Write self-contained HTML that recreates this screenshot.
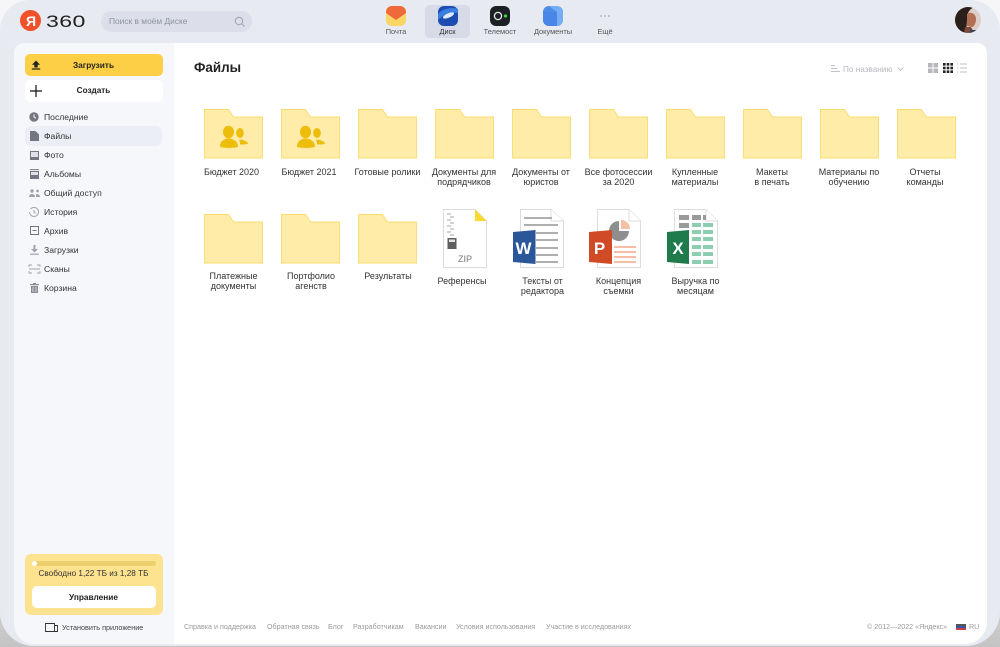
<!DOCTYPE html>
<html lang="ru"><head><meta charset="utf-8"><title>Файлы</title>
<style>
*{box-sizing:border-box}
html,body{margin:0;padding:0}
body{width:1000px;height:647px;overflow:hidden;position:relative;background:linear-gradient(#f6f6f8 0,#f0f0f2 75%,#c4c4c4 100%);font-family:"Liberation Sans",sans-serif;color:#222}
.a{position:absolute}
.t{position:absolute;white-space:nowrap;line-height:1}
.c{transform:translateX(-50%);text-align:center}
.lbl{position:absolute;width:76px;transform:translateX(-50%);text-align:center;font-size:9px;line-height:10.2px;color:#333}
.nav{position:absolute;left:44px;font-size:8.6px;color:#333;line-height:10px;white-space:nowrap}
.f{position:absolute;font-size:7.15px;color:#9a9a9a;line-height:8px;white-space:nowrap;top:623px}
svg{position:absolute;overflow:visible}
</style></head><body>
<div class="a" style="left:0;top:0;width:1000px;height:645.500px;background:#e8eaf2;border-radius:30px 30px 34px 34px"></div>
<div class="a" style="left:14px;top:43px;width:160px;height:601px;background:#f6f7fb;border-radius:10px 0 0 20px"></div>
<div class="a" style="left:174px;top:43px;width:813px;height:601px;background:#fff;border-radius:0 10px 22px 0"></div>

<!-- logo -->
<div class="a" style="left:20px;top:10px;width:21px;height:21px;border-radius:50%;background:#f0502a"></div>
<div class="t" style="left:26px;top:14px;font-size:14px;font-weight:bold;color:#fff">Я</div>
<div class="t" style="left:46px;top:13px;font-size:17px;letter-spacing:.3px;color:#222;transform:scaleX(1.36);transform-origin:left">360</div>
<!-- search -->
<div class="a" style="left:101px;top:11px;width:151px;height:21px;border-radius:11px;background:#dcdfe9"></div>
<div class="t" style="left:109px;top:17px;font-size:8.4px;color:#8e929c">Поиск в моём Диске</div>
<svg style="left:234px;top:16px" width="12" height="12" viewBox="0 0 12 12" fill="none" stroke="#a4a7b0" stroke-width="1.1"><circle cx="5" cy="5" r="3.7"/><path d="M8 8l2.6 2.6"/></svg>

<!-- top apps -->
<div class="a" style="left:425px;top:5px;width:45px;height:33px;border-radius:5px;background:#d7dbe7"></div>
<svg style="left:386px;top:6px" width="20" height="20" viewBox="0 0 20 20"><rect width="20" height="20" rx="6" fill="#fcd664"/><path d="M0 6a6 6 0 0 1 6-6h8a6 6 0 0 1 6 6v1l-10 7L0 7z" fill="#f0693a"/></svg>
<svg style="left:438px;top:6px" width="20" height="20" viewBox="0 0 20 20"><rect width="20" height="20" rx="6" fill="#1d4db0"/><path d="M0 8C5 2 14 1 20 3v4C14 6 6 8 0 14z" fill="#3a7ee0"/><ellipse cx="10.5" cy="9.5" rx="6" ry="2.2" transform="rotate(-24 10.5 9.5)" fill="#dfeaff"/></svg>
<svg style="left:490px;top:6px" width="20" height="20" viewBox="0 0 20 20" fill="none"><rect width="20" height="20" rx="6" fill="#1d2022"/><circle cx="8" cy="10" r="3.6" stroke="#e6e6e6" stroke-width="1.3"/><rect x="14" y="8.5" width="3" height="3" rx="1" fill="#3fe04b"/></svg>
<svg style="left:543px;top:6px" width="20" height="20" viewBox="0 0 20 20"><rect width="20" height="20" rx="6" fill="#4d8de8"/><path d="M6 0h8a6 6 0 0 1 6 6v8a6 6 0 0 1-6 6V6z" fill="#7fb4f5" opacity=".8"/><path d="M0 6h14v14H6a6 6 0 0 1-6-6z" fill="#4a86e6"/></svg>
<svg style="left:599px;top:14px" width="12" height="4" fill="#b6b9c2"><circle cx="2" cy="2" r="1"/><circle cx="6" cy="2" r="1"/><circle cx="10" cy="2" r="1"/></svg>
<div class="t c" style="left:396px;top:28px;font-size:7.4px;color:#555">Почта</div>
<div class="t c" style="left:447.5px;top:28px;font-size:7.4px;color:#333">Диск</div>
<div class="t c" style="left:500px;top:28px;font-size:7.4px;color:#555">Телемост</div>
<div class="t c" style="left:553px;top:28px;font-size:7.4px;color:#555">Документы</div>
<div class="t c" style="left:605px;top:28px;font-size:7.4px;color:#555">Ещё</div>

<!-- avatar -->
<svg style="left:955px;top:7px" width="26" height="26" viewBox="0 0 26 26"><defs><clipPath id="av"><circle cx="13" cy="13" r="13"/></clipPath></defs><g clip-path="url(#av)"><rect width="26" height="26" fill="#dccdc6"/><path d="M0 0h19c-4 2-6 5-7 9 0 6 0 11-2 17H0z" fill="#2a1f1b"/><path d="M12 7c4-3 9 0 9 5 0 3-1 7-4 8l-5-1 0-6z" fill="#b36f55"/><path d="M10 20l6 0 1 2 3 4H9z" fill="#7d4a3a"/><path d="M15 23h7v3h-7z" fill="#34435f"/></g></svg>

<!-- buttons -->
<div class="a" style="left:25px;top:54px;width:138px;height:22px;border-radius:5px;background:#fccf47"></div>
<svg style="left:31px;top:60px" width="10" height="10" viewBox="0 0 10 10" fill="#222"><path d="M5 0.5l4 4.2H6.7V7.5H3.3V4.7H1z"/><rect x="0.8" y="8.4" width="8.4" height="1.2"/></svg>
<div class="t c" style="left:93.5px;top:60.500px;font-size:8.300px;font-weight:bold;color:#222">Загрузить</div>
<div class="a" style="left:25px;top:80px;width:138px;height:22px;border-radius:5px;background:#fff"></div>
<svg style="left:30px;top:85px" width="12" height="12" stroke="#111" stroke-width="1.2"><path d="M6 0v12M0 6h12"/></svg>
<div class="t c" style="left:93.5px;top:86.500px;font-size:8.200px;font-weight:bold;color:#222">Создать</div>

<!-- nav -->
<div class="a" style="left:25px;top:126px;width:137px;height:20px;border-radius:6px;background:#eceef5"></div>
<div class="nav" style="top:112px">Последние</div>
<div class="nav" style="top:131px">Файлы</div>
<div class="nav" style="top:150px">Фото</div>
<div class="nav" style="top:169px">Альбомы</div>
<div class="nav" style="top:188px">Общий доступ</div>
<div class="nav" style="top:207px">История</div>
<div class="nav" style="top:226px">Архив</div>
<div class="nav" style="top:245px">Загрузки</div>
<div class="nav" style="top:264px">Сканы</div>
<div class="nav" style="top:283px">Корзина</div>
<svg style="left:29px;top:112px" width="10" height="10"><circle cx="5" cy="5" r="4.7" fill="#747781"/><path d="M5 2.5V5l1.8 1.2" stroke="#fff" fill="none"/></svg>
<svg style="left:30px;top:131px" width="9" height="10"><path d="M0 0h5.5L9 3.5V10H0z" fill="#747781"/></svg>
<svg style="left:30px;top:151px" width="9" height="9"><rect width="9" height="9" fill="#747781"/><rect x="1" y="1" width="7" height="5" fill="#dfe1e6"/></svg>
<svg style="left:30px;top:169px" width="9" height="10"><rect y="0" width="9" height="1.2" fill="#8a8d96"/><rect y="2" width="9" height="8" fill="#747781"/><rect x="1" y="3" width="7" height="3" fill="#dfe1e6"/></svg>
<svg style="left:29px;top:189px" width="11" height="9" fill="#a0a3ab"><circle cx="3" cy="2" r="1.7"/><path d="M0 8c0-2 1.5-3 3-3s3 1 3 3z"/><circle cx="8.5" cy="2" r="1.4"/><path d="M7 5c2 0 4 .7 4 3H7z"/></svg>
<svg style="left:29px;top:207px" width="10" height="10" fill="none" stroke="#a0a3ab"><path d="M1.6 2A4.5 4.5 0 1 1 .5 5"/><path d="M5 3v2.3l1.5 1"/></svg>
<svg style="left:30px;top:226px" width="9" height="9" fill="none" stroke="#747781"><rect x=".5" y=".5" width="8" height="8"/><path d="M2.5 4.5h4"/></svg>
<svg style="left:30px;top:245px" width="9" height="10" fill="#a0a3ab"><path d="M3.5 0h2v4H8L4.5 7.5 1 4h2.500z"/><rect y="8.600" width="9" height="1.200"/></svg>
<svg style="left:29px;top:264px" width="11" height="10" fill="none" stroke="#a0a3ab" stroke-width=".9"><path d="M0 3V1h3M8 1h3v2M0 7v2h3M8 9h3V7M0 5h11"/></svg>
<svg style="left:30px;top:283px" width="9" height="10" fill="#8a8d96"><rect y="1" width="9" height="1.200"/><rect x="3" width="3" height="1.500"/><path d="M1 3h7v7H1z"/><path d="M3 4v5M6 4v5" stroke="#f6f7fb" stroke-width=".7"/></svg>

<!-- storage -->
<div class="a" style="left:25px;top:554px;width:138px;height:61px;border-radius:6px;background:#fde28f"></div>
<div class="a" style="left:32px;top:561px;width:124px;height:5px;border-radius:3px;background:#ecd06e"></div>
<div class="a" style="left:32px;top:561px;width:5px;height:5px;border-radius:50%;background:#fff"></div>
<div class="t c" style="left:93.5px;top:570px;font-size:8.200px;color:#333">Свободно 1,22 ТБ из 1,28 ТБ</div>
<div class="a" style="left:32px;top:586px;width:124px;height:22px;border-radius:5px;background:#fff"></div>
<div class="t c" style="left:93.500px;top:592.500px;font-size:8.300px;font-weight:bold;color:#222">Управление</div>
<svg style="left:45px;top:623px" width="13" height="9" fill="none" stroke="#333" stroke-width=".9"><path d="M.5 8.500V.5h9v8zM9.500 2.500h3v6h-3"/></svg>
<div class="t" style="left:62px;top:623.500px;font-size:7.250px;color:#444">Установить приложение</div>

<!-- header -->
<div class="t" style="left:194px;top:61px;font-size:13.400px;font-weight:bold;color:#222">Файлы</div>
<svg style="left:831px;top:65px" width="9" height="8" stroke="#c0c2c8"><path d="M0 .5h4M0 3.500h6M0 6.500h9"/></svg>
<div class="t" style="left:843px;top:65.500px;font-size:8.200px;color:#b5b7bd">По названию</div>
<svg style="left:897px;top:67px" width="7" height="5" fill="none" stroke="#c0c2c8"><path d="M.5.5L3.500 3.500 6.500.5"/></svg>
<svg style="left:928px;top:63px" width="10" height="10" fill="#b6b8be"><rect width="4.500" height="4.500"/><rect x="5.500" width="4.500" height="4.500"/><rect y="5.500" width="4.500" height="4.500"/><rect x="5.500" y="5.500" width="4.500" height="4.500"/></svg>
<svg style="left:943px;top:63px" width="10" height="10" fill="#222"><rect width="2.600" height="2.600"/><rect x="3.700" width="2.600" height="2.600"/><rect x="7.400" width="2.600" height="2.600"/><rect y="3.700" width="2.600" height="2.600"/><rect x="3.700" y="3.700" width="2.600" height="2.600"/><rect x="7.400" y="3.700" width="2.600" height="2.600"/><rect y="7.400" width="2.600" height="2.600"/><rect x="3.700" y="7.400" width="2.600" height="2.600"/><rect x="7.400" y="7.400" width="2.600" height="2.600"/></svg>
<svg style="left:957px;top:63px" width="10" height="10" stroke="#c0c2c8"><path d="M0 1h1.500M3 1h7M0 5h1.500M3 5h7M0 9h1.500M3 9h7"/></svg>

<!-- folders -->
<svg width="0" height="0" style="position:absolute"><defs>
<symbol id="fo" viewBox="0 0 59 50"><path d="M.5.500h24l5 7.500h29v41H.5z" fill="#feeca8" stroke="#fbdc6c" stroke-width=".9"/></symbol>
<symbol id="fp" viewBox="0 0 59 50"><path d="M.5.500h24l5 7.500h29v41H.5z" fill="#feeca8" stroke="#fbdc6c" stroke-width=".9"/><g fill="#edbd0c"><ellipse cx="24.500" cy="23" rx="5.500" ry="6.300"/><path d="M16 37.500c0-5.500 4.500-8 8.500-8s9.500 2.500 9.500 8c0 1.800-18 1.800-18 0z"/><ellipse cx="36" cy="24" rx="3.800" ry="5"/><path d="M35 30.500c4 0 8 1.500 9 4 .3 1-6 1-8 1 0-2-.2-3.500-1-5z"/></g></symbol>
</defs></svg>
<svg style="left:204px;top:109px" width="59" height="50"><use href="#fp"/></svg>
<svg style="left:281px;top:109px" width="59" height="50"><use href="#fp"/></svg>
<svg style="left:358px;top:109px" width="59" height="50"><use href="#fo"/></svg>
<svg style="left:435px;top:109px" width="59" height="50"><use href="#fo"/></svg>
<svg style="left:512px;top:109px" width="59" height="50"><use href="#fo"/></svg>
<svg style="left:589px;top:109px" width="59" height="50"><use href="#fo"/></svg>
<svg style="left:666px;top:109px" width="59" height="50"><use href="#fo"/></svg>
<svg style="left:743px;top:109px" width="59" height="50"><use href="#fo"/></svg>
<svg style="left:820px;top:109px" width="59" height="50"><use href="#fo"/></svg>
<svg style="left:897px;top:109px" width="59" height="50"><use href="#fo"/></svg>
<svg style="left:204px;top:214px" width="59" height="50"><use href="#fo"/></svg>
<svg style="left:281px;top:214px" width="59" height="50"><use href="#fo"/></svg>
<svg style="left:358px;top:214px" width="59" height="50"><use href="#fo"/></svg>

<!-- zip -->
<svg style="left:443px;top:209px" width="44" height="59" viewBox="0 0 44 59"><path d="M.5.500H32L43.500 12v46.500H.5z" fill="#fff" stroke="#dcdcdc"/><path d="M32 .5L43.500 12H32z" fill="#fbd92f"/><path d="M4 5h4M7 8h4M4 11h4M7 14h4M4 17h4M7 20h4M4 23h4M7 26h4" stroke="#a5a5a5" stroke-width="1.100"/><rect x="4.500" y="29" width="9" height="11" fill="#5f5f5f"/><rect x="6" y="30.500" width="6" height="2.500" fill="#e4e4e4"/><text x="22" y="53" font-size="9" text-anchor="middle" fill="#777" font-family="Liberation Sans">ZIP</text></svg>
<!-- word -->
<svg style="left:513px;top:209px" width="51" height="59" viewBox="0 0 51 59"><path d="M7.500.5H38L50.500 12v46.500h-43z" fill="#fff" stroke="#dcdcdc"/><path d="M38 .5V12h12.500" fill="#fff" stroke="#dcdcdc"/><path d="M11 9h28M11 16h34M23 24h22M23 31h22M23 39h22M23 46h22M23 53h22" stroke="#a4a4a4" stroke-width="1.800" fill="none"/><path d="M0 23L22.500 21v34L0 53z" fill="#2b579a"/><text x="10.500" y="45" font-size="17" font-weight="bold" text-anchor="middle" fill="#fff" font-family="Liberation Sans">W</text></svg>
<!-- ppt -->
<svg style="left:589px;top:209px" width="52" height="59" viewBox="0 0 52 59"><path d="M8.500.5H40L51.500 12v46.500h-43z" fill="#fff" stroke="#dcdcdc"/><path d="M40 .5V12h11.500" fill="#fff" stroke="#dcdcdc"/><path d="M30 12a10 10 0 1 0 10 10H30z" fill="#8e8e8e"/><path d="M32 11a9 9 0 0 1 9 9H32z" fill="#f5bfa5"/><path d="M25 38h22M25 43h22M25 48h22M25 53h22" stroke="#f5b49b" stroke-width="1.800"/><path d="M0 23L23 21v34L0 53z" fill="#d04a25"/><text x="10.500" y="45" font-size="17" font-weight="bold" text-anchor="middle" fill="#fff" font-family="Liberation Sans">P</text></svg>
<!-- excel -->
<svg style="left:667px;top:209px" width="52" height="59" viewBox="0 0 52 59"><path d="M7.500.5H39L50.500 12v46.500h-43z" fill="#fff" stroke="#dcdcdc"/><path d="M39 .5V12h11.500" fill="#fff" stroke="#dcdcdc"/><g fill="#9a9a9a"><rect x="12" y="6" width="10" height="5"/><rect x="25" y="6" width="9" height="5"/><rect x="36" y="6" width="3" height="5"/><rect x="12" y="14" width="10" height="5"/></g><g fill="#8fcdb0"><rect x="25" y="14" width="9" height="4"/><rect x="36" y="14" width="10" height="4"/><rect x="25" y="21" width="9" height="4"/><rect x="36" y="21" width="10" height="4"/><rect x="25" y="28" width="9" height="4"/><rect x="36" y="28" width="10" height="4"/><rect x="25" y="36" width="9" height="4"/><rect x="36" y="36" width="10" height="4"/><rect x="25" y="43" width="9" height="4"/><rect x="36" y="43" width="10" height="4"/><rect x="25" y="51" width="9" height="4"/><rect x="36" y="51" width="10" height="4"/></g><path d="M0 23L22 21v34L0 53z" fill="#1f7a4c"/><text x="11" y="45" font-size="17" font-weight="bold" text-anchor="middle" fill="#fff" font-family="Liberation Sans">X</text></svg>

<!-- labels -->
<div class="lbl" style="left:231.500px;top:167px">Бюджет 2020</div>
<div class="lbl" style="left:309px;top:167px">Бюджет 2021</div>
<div class="lbl" style="left:387.500px;top:167px">Готовые ролики</div>
<div class="lbl" style="left:464px;top:167px">Документы для подрядчиков</div>
<div class="lbl" style="left:541px;top:167px">Документы от юристов</div>
<div class="lbl" style="left:618.500px;top:167px">Все фотосессии за 2020</div>
<div class="lbl" style="left:695px;top:167px">Купленные материалы</div>
<div class="lbl" style="left:772px;top:167px">Макеты<br>в печать</div>
<div class="lbl" style="left:849px;top:167px">Материалы по обучению</div>
<div class="lbl" style="left:925px;top:167px">Отчеты<br>команды</div>
<div class="lbl" style="left:233.500px;top:271px">Платежные документы</div>
<div class="lbl" style="left:311px;top:271px">Портфолио<br>агенств</div>
<div class="lbl" style="left:388px;top:271px">Результаты</div>
<div class="lbl" style="left:462px;top:276px">Референсы</div>
<div class="lbl" style="left:542.500px;top:276px">Тексты от редактора</div>
<div class="lbl" style="left:618.500px;top:276px">Концепция съемки</div>
<div class="lbl" style="left:695.500px;top:276px">Выручка по месяцам</div>

<!-- footer -->
<div class="f" style="left:184px">Справка и поддержка</div>
<div class="f" style="left:267px">Обратная связь</div>
<div class="f" style="left:328px">Блог</div>
<div class="f" style="left:353px">Разработчикам</div>
<div class="f" style="left:415px">Вакансии</div>
<div class="f" style="left:456px">Условия использования</div>
<div class="f" style="left:546px">Участие в исследованиях</div>
<div class="f" style="left:867px">© 2012—2022 «Яндекс»</div>
<svg style="left:956px;top:624px" width="10" height="6"><rect width="10" height="2" fill="#555"/><rect y="2" width="10" height="2" fill="#3b55a5"/><rect y="4" width="10" height="2" fill="#c9404a"/></svg>
<div class="f" style="left:969px">RU</div>
</body></html>
